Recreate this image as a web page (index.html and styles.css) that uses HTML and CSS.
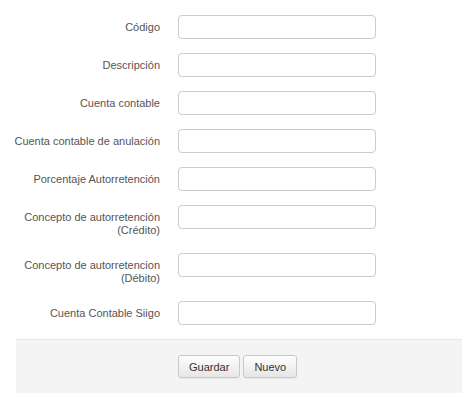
FILE: index.html
```html
<!DOCTYPE html>
<html lang="es">
<head>
  <meta charset="UTF-8">
  <title>Autorretención</title>
  <link rel="stylesheet" href="styles.css">
</head>
<body>
  <form class="form-horizontal">
    <div class="fields">
      <div class="form-group">
        <label class="control-label" for="codigo">Código</label>
        <input type="text" id="codigo" class="form-control">
      </div>
      <div class="form-group">
        <label class="control-label" for="descripcion">Descripción</label>
        <input type="text" id="descripcion" class="form-control">
      </div>
      <div class="form-group">
        <label class="control-label" for="cuenta">Cuenta contable</label>
        <input type="text" id="cuenta" class="form-control">
      </div>
      <div class="form-group">
        <label class="control-label" for="cuentaAnul">Cuenta contable de anulación</label>
        <input type="text" id="cuentaAnul" class="form-control">
      </div>
      <div class="form-group">
        <label class="control-label" for="porcentaje">Porcentaje Autorretención</label>
        <input type="text" id="porcentaje" class="form-control">
      </div>
      <div class="form-group">
        <label class="control-label" for="conceptoCred">Concepto de autorretención (Crédito)</label>
        <input type="text" id="conceptoCred" class="form-control">
      </div>
      <div class="form-group">
        <label class="control-label" for="conceptoDeb">Concepto de autorretencion (Débito)</label>
        <input type="text" id="conceptoDeb" class="form-control">
      </div>
      <div class="form-group">
        <label class="control-label" for="siigo">Cuenta Contable Siigo</label>
        <input type="text" id="siigo" class="form-control">
      </div>
    </div>

    <div class="form-actions">
      <button type="button" class="btn">Guardar</button>
      <button type="button" class="btn">Nuevo</button>
    </div>
  </form>
</body>
</html>
```

FILE: styles.css
```css
body {
  margin: 0;
  font-family: "Liberation Sans", Arial, sans-serif;
  font-size: 11px;
  color: #333;
  background: #fff;
}
.form-horizontal {
  padding-top: 15px;
}
.fields {
  padding-left: 8px;
}
.form-group {
  display: grid;
  grid-template-columns: 152px 198px;
  column-gap: 18px;
  align-items: start;
  margin-bottom: 14px;
}
.control-label {
  text-align: right;
  color: #555;
  line-height: 13px;
  padding: 6px 0 2px;
}
.form-control {
  box-sizing: border-box;
  width: 198px;
  height: 24px;
  margin: 0;
  padding: 3px 6px;
  border: 1px solid #ccc;
  border-radius: 4px;
  background: #fff;
  font: inherit;
}
.form-actions {
  margin-left: 16px;
  background: #f4f4f4;
  border-top: 1px solid #e5e5e5;
  padding: 15px 0 15px 162px;
  height: 23px;
}
.btn {
  height: 23px;
  padding: 0 10px;
  margin: 0;
  font: inherit;
  color: #333;
  border: 1px solid #c8c8c8;
  border-radius: 3px;
  background: linear-gradient(#fefefe, #e6e6e6);
  box-shadow: 0 1px 1px rgba(0,0,0,0.05);
  cursor: pointer;
}
.btn:hover {
  background: #e6e6e6;
}
```
